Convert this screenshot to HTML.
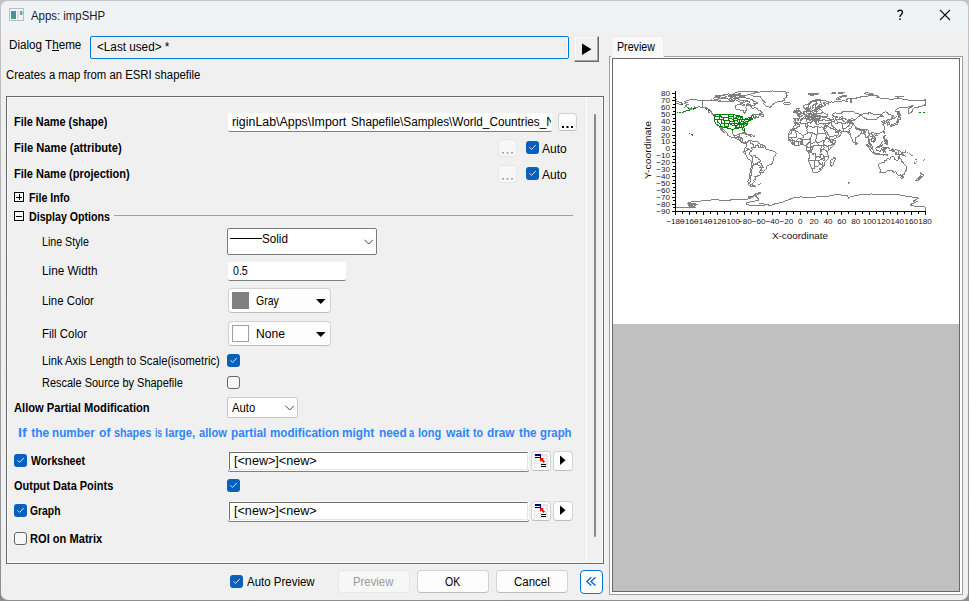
<!DOCTYPE html>
<html><head><meta charset="utf-8"><title>Apps: impSHP</title>
<style>
html,body{margin:0;padding:0;}
body{width:969px;height:601px;overflow:hidden;position:relative;background:linear-gradient(#c4c4c8,#8c8c8c);font-family:"Liberation Sans",sans-serif;font-size:12px;color:#000;}
.abs,.t,div,svg{position:absolute;box-sizing:border-box;}
.t{white-space:pre;line-height:14px;transform-origin:0 0;}
#win{left:1px;top:1px;width:967px;height:599px;background:#f0f0f0;border-radius:7px;overflow:hidden;}
#title{left:0;top:0;width:967px;height:30px;background:#eff3f6;}
.cb{width:13px;height:13px;border-radius:3px;background:#0760be;}
.cb svg{left:0;top:0;}
.cbu{width:13px;height:13px;border-radius:3px;border:1px solid #666;background:#f7f7f7;}
.btn{border:1px solid #d2d2d2;border-bottom-color:#bdbdbd;border-radius:4px;background:#fdfdfd;}
.btnd{border:1px solid #e6e6e6;border-radius:4px;background:#f7f7f7;}
.edit{background:#fff;border-bottom:1px solid #808080;border-radius:2px;}
.sunk{background:#fff;border:1px solid #fcfcfc;border-radius:2px;box-shadow:0 1px 0 #808080;}
.sunk::after{content:'';position:absolute;left:0;top:0;right:0;bottom:0;border:1px solid;border-color:#6b6b6b #e6e6e6 #e6e6e6 #6b6b6b;}

</style></head>
<body>
<div id="win"></div>
<div style="left:1px;top:1px;width:967px;height:30px;background:#eff3f6;border-radius:7px 7px 0 0"></div>
<!-- title icon -->
<svg style="left:9px;top:8px" width="16" height="14" viewBox="0 0 16 14">
<rect x="0.5" y="0.5" width="14" height="12" fill="#f4f4f4" stroke="#b9bcc0"/>
<defs><linearGradient id="g1" x1="0" y1="0" x2="0" y2="1"><stop offset="0" stop-color="#4f86c6"/><stop offset="1" stop-color="#3fa060"/></linearGradient></defs>
<rect x="2" y="3" width="5" height="8" fill="url(#g1)"/>
<rect x="8" y="3" width="2" height="8" fill="#dcdcdc"/>
<rect x="11" y="3" width="2.5" height="4" fill="url(#g1)" opacity="0.8"/>
</svg>
<!-- ? and X -->
<svg style="left:890px;top:5px" width="70" height="22" viewBox="0 0 70 22">
<path d="M7.7 6.9 C7.9 4.7 12.5 4.6 12.5 7.3 C12.5 9.3 9.9 9.6 9.9 12" fill="none" stroke="#111" stroke-width="1.45"/>
<rect x="9.1" y="13.4" width="1.6" height="1.6" fill="#111"/>
<path d="M50 5 L60 15 M60 5 L50 15" stroke="#111" stroke-width="1.1" fill="none"/>
</svg>
<!-- theme combo -->
<div style="left:90px;top:36px;width:479px;height:23px;border:1px solid #0078d4;border-radius:2px;background:#f0f0f0;box-shadow:inset 0 0 0 1px #f9f9f9"></div>
<div style="left:51.5px;top:50px;width:7px;height:1px;background:#000"></div>
<!-- play button -->
<div style="left:574px;top:36px;width:25px;height:26px;background:#f0f0f0;border:1px solid #ebebeb;border-right-color:#696969;border-bottom-color:#696969;box-shadow:inset -1px -1px 0 #a0a0a0, inset 1px 1px 0 #fff"></div>
<svg style="left:581px;top:43px" width="12" height="13" viewBox="0 0 12 13"><path d="M1 0.5 L10.5 6.2 L1 12 Z" fill="#000"/></svg>

<!-- group box -->
<div style="left:6px;top:96px;width:598px;height:468px;border:1px solid #696969;box-shadow:inset 1px 1px 0 #fafafa, inset -1px -1px 0 #fff, 1px 1px 0 #f5f5f5"></div>
<div style="left:586px;top:97px;width:1px;height:466px;background:#fff"></div>
<div style="left:594px;top:114px;width:2px;height:423px;background:#8a8a8a;border-radius:1px"></div>

<!-- file name row -->
<div class="edit" style="left:228px;top:113px;width:324px;height:19px"></div>
<div class="btn" style="left:558px;top:113px;width:19px;height:18px"></div>
<svg style="left:561px;top:125px" width="14" height="4"><rect x="1" y="1" width="2" height="2" fill="#000"/><rect x="5.5" y="1" width="2" height="2" fill="#000"/><rect x="10" y="1" width="2" height="2" fill="#000"/></svg>
<div class="btnd" style="left:498px;top:139px;width:19px;height:18px"></div>
<svg style="left:501px;top:151px" width="14" height="4"><rect x="1" y="1" width="2" height="1.6" fill="#a6a6a6"/><rect x="5.5" y="1" width="2" height="1.6" fill="#a6a6a6"/><rect x="10" y="1" width="2" height="1.6" fill="#a6a6a6"/></svg>
<div class="btnd" style="left:498px;top:165px;width:19px;height:18px"></div>
<svg style="left:501px;top:177px" width="14" height="4"><rect x="1" y="1" width="2" height="1.6" fill="#a6a6a6"/><rect x="5.5" y="1" width="2" height="1.6" fill="#a6a6a6"/><rect x="10" y="1" width="2" height="1.6" fill="#a6a6a6"/></svg>
<div class="cb" style="left:526px;top:141px"><svg width="13" height="13"><path d="M3.5 6.3 L5.6 8.4 L9.8 4" fill="none" stroke="#e4eefa" stroke-width="0.95"/></svg></div>
<div class="cb" style="left:526px;top:167px"><svg width="13" height="13"><path d="M3.5 6.3 L5.6 8.4 L9.8 4" fill="none" stroke="#e4eefa" stroke-width="0.95"/></svg></div>

<!-- tree boxes -->
<div style="left:13px;top:191px;width:12px;height:12px;background:#f8f8f8"></div>
<div style="left:14px;top:192px;width:10px;height:10px;background:#fafafa;border:1px solid #000"></div>
<div style="left:16px;top:197px;width:6px;height:1px;background:#000"></div>
<div style="left:19px;top:194px;width:1px;height:6px;background:#000"></div>
<div style="left:13px;top:210px;width:12px;height:12px;background:#f8f8f8"></div>
<div style="left:14px;top:211px;width:10px;height:10px;background:#fafafa;border:1px solid #000"></div>
<div style="left:16px;top:216px;width:6px;height:1px;background:#000"></div>
<div style="left:114px;top:215px;width:459px;height:1px;background:#a0a0a0"></div>

<!-- line style combo -->
<div style="left:227px;top:228px;width:150px;height:27px;border:1px solid #7a7a7a;border-radius:2px;background:#fff"></div>
<div style="left:230px;top:238px;width:32px;height:1px;background:#000"></div>
<svg style="left:363px;top:238px" width="12" height="8"><path d="M1.5 1.8 L5.7 6 L9.9 1.8" fill="none" stroke="#444" stroke-width="1"/></svg>
<!-- line width -->
<div class="edit" style="left:228px;top:262px;width:118px;height:19px"></div>
<!-- line color -->
<div class="btn" style="left:228px;top:288px;width:103px;height:25px"></div>
<div style="left:232px;top:292px;width:17px;height:17px;background:#808080"></div>
<svg style="left:315px;top:298px" width="12" height="7"><path d="M1 1 H10.6 L5.8 6 Z" fill="#000"/></svg>
<!-- fill color -->
<div class="btn" style="left:228px;top:321px;width:103px;height:25px"></div>
<div style="left:232px;top:325px;width:17px;height:17px;background:#fff;border:1px solid #a0a0a0"></div>
<svg style="left:315px;top:331px" width="12" height="7"><path d="M1 1 H10.6 L5.8 6 Z" fill="#000"/></svg>
<!-- checkboxes -->
<div class="cb" style="left:227px;top:354px"><svg width="13" height="13"><path d="M3.5 6.3 L5.6 8.4 L9.8 4" fill="none" stroke="#e4eefa" stroke-width="0.95"/></svg></div>
<div class="cbu" style="left:227px;top:376px"></div>
<!-- auto combo -->
<div style="left:227px;top:397px;width:71px;height:21px;border:1px solid #c9c9c9;border-radius:2px;background:#fff"></div>
<svg style="left:284px;top:404px" width="12" height="8"><path d="M1.5 1.8 L5.7 6 L9.9 1.8" fill="none" stroke="#444" stroke-width="1"/></svg>

<!-- worksheet row -->
<div class="cb" style="left:14px;top:454px"><svg width="13" height="13"><path d="M3.5 6.3 L5.6 8.4 L9.8 4" fill="none" stroke="#e4eefa" stroke-width="0.95"/></svg></div>
<div class="sunk" style="left:228px;top:451px;width:301px;height:20px"></div>
<div class="btn" style="left:531px;top:451px;width:20px;height:20px"></div>
<div class="btn" style="left:553px;top:451px;width:20px;height:20px"></div>
<svg style="left:559px;top:455px" width="8" height="11"><path d="M1 0.5 L6.5 5.2 L1 10 Z" fill="#000"/></svg>
<svg style="left:534px;top:454px" width="14" height="14" viewBox="0 0 14 14">
<rect x="0" y="0" width="14" height="14" fill="#e6e6e6"/>
<rect x="1" y="2.5" width="11" height="1.6" fill="#fff"/><rect x="1" y="5" width="11" height="1.6" fill="#fff"/><rect x="1" y="7.5" width="11" height="1.6" fill="#fff"/><rect x="1" y="10" width="11" height="1.3" fill="#fff"/><rect x="1" y="12" width="11" height="1.2" fill="#fff"/>
<rect x="6.6" y="0" width="0.6" height="14" fill="#e6e6e6"/>
<rect x="1" y="0" width="6" height="2" fill="#00008b"/>
<rect x="1" y="3" width="6" height="1" fill="#000"/><rect x="6" y="2" width="1" height="1" fill="#000"/>
<path d="M6 4 L9.8 4 L8.7 5.2 L11 7.6 L9.6 9 L7.3 6.6 L6 7.8 Z" fill="#ff0000"/>
<rect x="7" y="10" width="5" height="1" fill="#000"/><rect x="7" y="12" width="5" height="1" fill="#000"/>
</svg>

<div class="cb" style="left:227px;top:479px"><svg width="13" height="13"><path d="M3.5 6.3 L5.6 8.4 L9.8 4" fill="none" stroke="#e4eefa" stroke-width="0.95"/></svg></div>
<!-- graph row -->
<div class="cb" style="left:14px;top:504px"><svg width="13" height="13"><path d="M3.5 6.3 L5.6 8.4 L9.8 4" fill="none" stroke="#e4eefa" stroke-width="0.95"/></svg></div>
<div class="sunk" style="left:228px;top:501px;width:301px;height:20px"></div>
<div class="btn" style="left:531px;top:501px;width:20px;height:20px"></div>
<div class="btn" style="left:553px;top:501px;width:20px;height:20px"></div>
<svg style="left:559px;top:505px" width="8" height="11"><path d="M1 0.5 L6.5 5.2 L1 10 Z" fill="#000"/></svg>
<svg style="left:534px;top:504px" width="14" height="14" viewBox="0 0 14 14">
<rect x="0" y="0" width="14" height="14" fill="#e6e6e6"/>
<rect x="1" y="2.5" width="11" height="1.6" fill="#fff"/><rect x="1" y="5" width="11" height="1.6" fill="#fff"/><rect x="1" y="7.5" width="11" height="1.6" fill="#fff"/><rect x="1" y="10" width="11" height="1.3" fill="#fff"/><rect x="1" y="12" width="11" height="1.2" fill="#fff"/>
<rect x="6.6" y="0" width="0.6" height="14" fill="#e6e6e6"/>
<rect x="1" y="0" width="6" height="2" fill="#00008b"/>
<rect x="1" y="3" width="6" height="1" fill="#000"/><rect x="6" y="2" width="1" height="1" fill="#000"/>
<path d="M6 4 L9.8 4 L8.7 5.2 L11 7.6 L9.6 9 L7.3 6.6 L6 7.8 Z" fill="#ff0000"/>
<rect x="7" y="10" width="5" height="1" fill="#000"/><rect x="7" y="12" width="5" height="1" fill="#000"/>
</svg>

<div class="cbu" style="left:14px;top:532px"></div>

<!-- bottom row -->
<div class="cb" style="left:230px;top:575px"><svg width="13" height="13"><path d="M3.5 6.3 L5.6 8.4 L9.8 4" fill="none" stroke="#e4eefa" stroke-width="0.95"/></svg></div>
<div class="btnd" style="left:338px;top:570px;width:72px;height:23px"></div>
<div class="btn" style="left:417px;top:570px;width:72px;height:23px"></div>
<div class="btn" style="left:496px;top:570px;width:72px;height:23px"></div>
<div style="left:580px;top:570px;width:23px;height:24px;border:1px solid #0078d4;border-radius:4px;background:#fdfdfd"></div>
<svg style="left:585px;top:576px" width="14" height="12"><path d="M6.3 1.2 L1.8 5.4 L6.3 9.6 M10.5 1.2 L6 5.4 L10.5 9.6" fill="none" stroke="#0b63d1" stroke-width="1.35"/></svg>

<!-- preview tab + panel -->
<div style="left:609px;top:56px;width:354px;height:539px;border:1px solid #a0a0a0;background:#fff"></div>
<div style="left:611px;top:36px;width:53px;height:22px;background:#f9f9f9;border:1px solid #ececec;border-bottom:none"></div>
<div style="left:612px;top:58px;width:348px;height:534px;border:1px solid #696969;background:#c0c0c0"></div>
<div style="left:613px;top:59px;width:346px;height:265px;background:#fff"></div>
<svg style="left:613px;top:59px" width="346" height="265" viewBox="613 59 346 265">
<path d="M691.8 99.4L694.9 99.8L697.7 100.1L702.5 100.6L706.7 101.0L709.5 100.3L711.5 100.0L713.6 100.6L717.1 100.6L720.6 101.7L724.0 101.7L727.5 101.3L732.3 101.7L733.7 102.0L734.8 98.9L736.5 100.6L739.3 101.3L741.3 100.4L743.4 100.6L744.1 102.4L740.7 102.7L740.0 104.1L737.9 104.4L735.1 106.2L735.1 108.0L736.1 109.3L738.6 109.6L741.3 110.5L743.2 110.7L743.4 112.0L744.5 113.2L745.6 112.7L745.5 111.0L747.0 109.6L746.9 108.6L745.8 107.9L746.5 105.6L749.7 105.7L751.7 106.5L752.1 108.0L753.8 108.4L755.2 107.0L755.9 107.9L757.3 108.9L757.6 110.0L760.1 110.8L761.6 112.2L760.8 113.1L758.7 114.0L754.2 114.0L752.4 115.1L751.0 116.3L752.4 115.6L753.8 114.8L755.6 114.8L755.2 115.8L755.9 116.9L758.0 117.2L758.7 116.5L758.0 117.4L755.9 118.0L754.5 118.6L754.5 117.9L755.6 117.4L753.8 117.6L751.7 118.5L751.0 119.3L751.7 119.6L750.7 120.1L749.0 120.6L747.9 121.7L747.6 123.1L747.8 124.3L746.3 125.2L745.2 125.8L744.1 126.5L743.8 127.6L744.7 130.0L744.7 131.2L744.0 131.2L742.9 129.5L742.9 128.5L742.0 127.9L741.0 128.1L739.6 127.7L738.2 127.8L738.4 128.6L737.2 128.4L735.2 128.1L734.4 128.6L732.8 129.6L732.9 130.7L732.5 133.2L733.4 135.2L734.8 136.1L736.5 135.8L737.5 134.3L740.0 133.8L739.6 135.2L739.3 136.1L738.7 137.6L740.7 137.6L742.6 138.3L742.3 140.0L742.2 141.0L743.2 142.3L744.8 142.3L745.5 142.0L746.7 142.7M746.3 143.6L745.8 142.8L744.8 143.6L744.1 143.1L742.7 142.9L740.8 141.7L739.6 139.7L738.2 139.3L736.8 139.0L735.1 137.5L733.4 137.8L730.9 136.9L728.2 135.5L727.1 134.5L727.1 133.1L725.4 131.4L724.4 130.3L722.3 128.3L721.8 127.1L720.8 126.7L720.9 127.9L722.3 129.6L723.3 131.4L724.4 132.6L723.9 132.7L722.5 131.4L721.2 129.8L720.6 129.0L720.0 127.6L719.1 126.2L718.1 125.2L716.7 124.7L715.7 123.2L715.4 122.5L714.3 120.8L714.2 118.9L714.3 116.7L713.8 115.2L715.0 115.3L715.0 114.8L713.6 114.1L711.9 113.4L711.5 112.0L710.2 111.1L709.5 110.0L707.7 108.6L705.6 108.4L704.6 107.6L703.2 107.3L700.5 107.2L699.1 106.5L697.3 107.2L696.3 107.7L694.9 106.7L695.3 107.7L693.5 108.2L691.8 108.9L690.4 110.0L688.7 110.5L687.3 110.8L686.2 111.0L688.7 110.0L690.7 108.9L691.4 108.0L690.1 108.2L688.0 108.1L688.0 107.2L685.9 106.7L685.2 105.8L685.9 105.1L688.7 104.8L688.7 104.1L686.6 104.1L684.9 103.5L683.8 103.3L686.6 102.7L688.0 102.9L686.9 102.4L685.2 101.5L687.3 100.6L689.4 100.0L691.8 99.4M746.7 142.7L747.9 141.4L748.4 141.0L750.0 140.3L750.7 140.1L750.6 141.2L751.7 140.7L752.8 141.4L754.5 141.3L755.9 141.4L757.3 141.2L758.0 142.1L758.7 142.8L759.7 143.8L760.8 144.5L762.1 144.5L763.9 145.2L764.8 145.9L765.6 147.4L765.6 148.6L766.6 149.3L768.4 149.3L769.4 150.6L771.5 150.6L773.2 151.2L774.5 151.9L775.8 152.2L776.1 153.6L775.9 155.2L774.6 156.6L773.6 157.6L773.2 159.3L773.1 160.9L772.5 162.4L771.8 163.8L770.5 164.5L769.1 165.1L767.7 165.7L766.6 166.6L766.5 168.2L765.6 169.3L764.1 170.9L763.2 172.1L762.1 172.7L760.8 172.4L759.8 172.1L760.6 173.5L760.3 174.9L758.7 175.5L757.3 175.5L757.1 176.8L755.2 176.9L755.9 178.0L755.0 179.5L753.5 180.4L754.5 181.4L754.5 181.8L753.1 183.1L752.4 183.8L752.8 184.7L752.8 185.0L755.1 186.4L753.8 186.8L751.7 186.6L750.4 185.9L749.0 184.9L748.3 183.1L747.9 181.1L749.0 179.0L749.2 177.5L749.3 175.9L749.7 174.2L750.6 171.4L750.7 169.3L751.4 166.2L751.6 162.4L751.5 161.3L750.4 160.4L748.3 159.3L747.4 158.2L746.8 156.9L745.8 154.8L744.9 153.5L744.0 152.8L743.9 151.6L744.8 150.9L744.2 150.1L744.5 149.0L744.8 148.1L745.6 147.6L746.0 146.8L746.8 145.9L746.5 144.5L746.3 143.6M758.0 184.2L760.1 184.0L759.7 184.7L758.0 184.5L758.0 184.2M796.2 123.9L798.9 124.4L801.0 123.4L802.3 123.2L805.8 123.2L807.2 122.9L807.9 123.2L807.3 125.2L807.9 125.7L810.7 126.3L813.4 127.7L814.1 127.2L814.1 126.0L816.2 126.1L817.6 126.8L820.4 127.3L821.7 126.9L822.6 127.1L824.0 127.0L822.8 127.9L823.5 129.3L824.2 130.0L824.9 132.1L825.9 134.1L826.2 135.9L827.3 137.9L828.7 138.6L830.2 140.0L830.1 140.7L831.1 141.4L832.8 140.9L835.7 140.5L835.6 141.4L834.2 144.1L833.2 145.9L830.8 147.9L829.0 149.8L828.0 151.0L827.3 152.8L827.6 154.5L828.3 155.9L828.3 158.6L826.6 160.6L824.5 162.4L824.9 164.8L823.1 166.2L823.0 167.3L821.7 169.2L819.7 171.4L817.9 172.1L815.5 172.2L814.1 172.6L813.0 172.1L812.7 170.7L811.7 168.4L810.7 166.6L810.3 164.2L808.6 161.0L808.4 159.7L809.6 157.3L809.4 154.8L808.7 152.8L808.4 151.7L806.8 150.3L806.5 149.1L806.8 147.9L807.1 146.6L806.4 145.5L804.4 145.7L803.4 144.3L802.0 144.3L801.0 144.6L798.9 145.3L797.1 145.0L795.1 145.7L793.7 144.8L792.3 143.9L791.1 142.8L790.9 141.9L789.9 141.0L788.7 140.1L788.6 139.3L788.1 138.5L788.8 137.6L789.0 135.5L788.5 134.1L789.2 132.4L790.2 130.7L791.2 129.4L792.6 128.7L793.5 128.1L793.5 126.9L794.4 125.6L795.5 125.2L796.2 123.9M834.4 156.9L835.3 159.3L834.6 160.4L833.4 164.2L832.8 165.9L831.4 166.2L830.4 164.8L830.3 163.8L831.1 162.3L830.8 160.7L831.4 159.7L833.2 158.8L834.4 156.9M796.4 123.8L795.8 123.2L795.1 122.9L794.1 123.1L794.2 122.0L793.7 121.9L794.2 120.7L794.2 119.7L793.8 118.9L794.7 118.5L796.8 118.5L798.9 118.7L799.4 117.9L799.4 116.9L798.5 116.0L797.1 115.6L796.9 115.1L798.2 114.9L799.1 115.1L799.1 114.4L800.4 114.5L801.3 114.0L801.4 113.5L802.7 113.1L803.4 112.4L803.6 112.0L805.1 111.7L806.1 111.3L806.2 110.3L805.9 109.3L807.5 108.8L807.5 109.6L807.1 110.3L807.2 111.0L807.9 111.3L808.9 111.1L810.1 111.4L811.7 111.0L813.1 110.8L814.0 111.1L814.8 110.5L814.8 109.3L815.9 108.8L817.1 109.1L817.2 108.4L816.5 107.8L819.0 107.6L819.7 107.6L821.1 107.2L820.0 106.9L818.3 106.9L816.2 107.3L815.0 106.7L815.2 105.1L817.6 103.8L817.9 103.4L815.9 103.2L815.2 104.1L812.7 105.5L812.2 106.5L812.2 106.9L813.3 107.2L812.7 107.9L811.8 109.3L811.3 109.8L810.2 110.3L809.3 110.4L809.1 109.6L808.0 108.2L807.7 107.7L806.8 107.9L805.8 108.5L804.4 108.2L803.7 107.2L803.7 105.8L805.1 105.1L807.2 104.4L809.3 103.1L810.7 101.7L812.4 100.9L814.1 100.3L816.2 99.8L818.1 99.5L819.7 99.6L821.7 100.1L821.1 100.4L823.1 100.7L825.9 101.0L828.7 101.9L828.7 102.9L826.9 103.1L823.5 102.6L824.5 104.2L825.9 104.6L826.2 103.8L828.0 104.0L828.0 103.1L830.8 102.9L831.1 101.7L832.8 102.4L837.3 101.3L839.8 101.3L841.8 101.3L842.2 100.4L845.3 101.0L847.4 101.3L846.7 100.6L846.7 99.6L848.1 98.2L850.2 98.4L850.9 100.0L850.9 101.7L850.2 102.7L851.5 102.4L851.9 101.0L851.2 99.3L852.2 98.6L854.3 98.9L855.7 98.9L856.4 97.9L860.6 97.7L860.6 96.9L868.2 96.0L872.3 95.0L873.7 95.3L878.6 96.2L878.6 97.6L876.5 97.5L878.6 97.9L883.4 98.2L888.3 98.6L890.4 99.6L892.4 99.3L897.3 98.4L904.2 99.3L905.6 99.6L911.2 100.5L912.5 100.6L918.1 100.3L918.8 101.0L922.2 100.4L925.0 101.0M925.0 103.8L924.3 105.5L919.5 106.5L918.1 107.2L914.6 107.2L913.2 108.6L912.5 110.7L911.2 112.7L908.9 113.4L908.4 110.7L908.0 109.3L909.8 107.9L911.8 106.9L913.9 105.5L911.2 106.0L908.7 106.2L907.7 107.7L904.2 107.6L899.4 107.7L897.3 108.9L895.2 111.0L898.0 111.8L897.6 113.4L897.5 115.5L895.9 116.9L893.8 118.6L891.7 118.8L890.8 119.4L890.2 120.1L888.6 121.2L889.9 123.1L889.9 124.1L887.9 124.9L887.9 123.2L886.9 122.5L887.0 121.4L886.4 121.0L884.5 121.7L884.8 120.6L884.1 120.4L882.0 121.6L882.7 122.9L884.0 122.5L885.2 123.1L883.6 123.8L882.9 124.5L884.0 126.2L884.7 127.2L884.7 128.3L884.5 129.1L883.1 131.0L881.4 132.4L879.3 133.2L876.8 133.9L876.5 134.6L875.5 133.6L874.1 134.6L873.6 135.5L874.4 136.9L875.7 137.9L876.0 139.7L875.8 140.7L874.3 141.4L873.0 142.6L873.0 141.7L871.6 141.0L871.3 140.2L870.3 139.9L869.6 139.4L869.1 141.0L869.1 142.2L869.8 143.6L870.6 143.9L871.6 144.8L872.0 145.9L872.5 147.7L872.0 147.7L870.5 146.7L869.8 144.8L869.4 144.1L868.4 143.1L868.5 141.7L868.7 140.3L868.0 137.9L867.6 137.0L866.4 137.7L865.6 137.4L865.8 136.2L865.1 134.8L864.2 134.1L863.7 133.0L862.8 133.4L861.9 133.6L860.6 133.9L860.2 134.8L859.2 135.2L857.3 137.0L855.8 137.9L855.9 139.7L855.6 141.5L855.0 142.1L854.5 142.5L854.0 143.0L853.1 141.9L852.2 140.0L851.9 138.6L851.2 137.6L850.8 135.5L850.6 134.1L850.5 133.8L849.1 134.3L848.1 133.3L849.0 132.8L847.7 132.4L846.9 131.5L846.3 131.1L843.0 131.2L840.5 131.0L839.8 130.1L839.3 129.9L838.0 130.3L836.0 129.4L835.1 127.9L834.2 127.7L833.5 128.1L833.9 129.2L835.1 130.3L835.5 131.5L835.8 130.6L836.0 131.8L837.7 131.9L839.1 130.7L839.4 131.7L840.9 132.3L841.7 133.2L840.9 134.5L840.2 135.5L838.6 136.7L836.4 137.6L834.0 139.0L831.4 139.8L830.4 139.9L829.9 138.4L829.9 137.3L828.7 135.5L827.4 133.8L826.9 132.2L826.0 131.2L824.7 129.3L824.4 128.3L824.0 127.0L824.5 126.0L825.1 124.5L825.3 123.3L823.8 123.6L822.6 123.6L821.5 123.2L820.4 123.6L819.2 123.2L818.5 122.2L818.8 121.4L818.4 121.0L820.4 120.7L820.4 120.2L822.0 120.2L823.5 119.6L824.5 119.6L825.6 120.1L826.9 120.4L829.0 120.0L829.0 119.1L827.8 118.6L826.6 117.9L826.1 117.4L826.9 116.8L827.4 116.0L826.6 116.1L824.7 116.6L824.5 117.1L825.6 117.4L823.5 118.0L822.8 117.3L823.5 116.8L822.3 116.5L821.5 116.6L820.8 117.4L820.1 118.4L819.6 119.1L819.7 119.7L820.4 120.2M818.4 121.0L818.3 120.5L816.9 120.5L816.5 120.9L816.1 120.7L816.1 121.4L816.9 122.4L816.2 123.4L815.3 123.2L815.0 122.2L814.1 121.2L813.7 120.0L813.8 119.6L812.4 118.9L811.3 118.5L810.7 117.6L809.8 117.1L808.9 117.4L808.9 118.1L809.7 118.6L810.1 119.4L811.3 119.7L813.1 120.9L812.0 120.7L811.8 121.3L812.1 121.7L811.6 122.2L811.1 122.4L811.3 121.7L811.1 121.0L810.3 120.5L808.8 119.8L807.5 119.0L807.3 118.3L806.4 118.0L805.5 118.4L804.6 118.9L803.4 118.7L802.5 118.8L802.5 119.7L800.8 120.5L800.1 121.4L800.4 121.9L799.8 122.7L798.9 123.2L797.2 123.3L796.4 123.8M832.8 117.2L834.6 116.5L836.0 116.2L837.0 116.3L837.0 117.4L835.6 117.9L835.1 118.9L836.6 120.0L837.0 121.0L837.5 121.7L837.5 123.1L835.6 123.3L834.2 122.7L834.1 121.7L834.6 120.7L833.2 118.9L832.8 117.2M796.3 114.0L797.8 113.9L799.6 113.6L801.2 113.3L800.6 113.1L801.4 112.2L800.4 112.0L800.3 111.6L799.2 110.7L798.9 110.0L798.0 110.0L798.9 108.9L797.5 108.9L798.2 108.2L796.8 108.2L796.1 108.9L796.4 110.0L796.9 110.3L796.8 110.8L797.9 110.7L798.2 111.5L798.2 111.8L797.1 111.8L797.3 112.5L796.7 112.9L798.2 113.1L797.3 113.3L796.3 114.0M796.1 112.6L796.0 111.7L796.4 111.0L796.0 110.5L794.5 110.6L794.4 111.1L793.3 111.2L793.5 111.8L793.8 112.3L793.2 112.9L794.4 113.0L796.1 112.6M784.7 104.5L783.6 103.4L784.7 102.8L787.8 102.9L789.9 102.9L790.8 103.8L789.5 104.3L787.2 104.9L784.7 104.5M808.9 122.4L811.0 122.3L810.7 123.3L808.9 122.7L808.9 122.4M806.0 120.3L807.0 120.3L806.9 121.6L806.1 121.7L806.0 120.3M806.2 119.4L806.8 118.9L806.8 120.0L806.4 119.9L806.2 119.4M816.6 124.1L818.5 124.3L817.2 124.5L816.6 124.1M822.6 124.5L824.2 124.0L823.6 124.6L822.6 124.5M807.9 93.7L810.0 95.1L812.0 95.7L814.8 94.4L816.2 95.1L817.6 94.4L815.5 93.9L819.0 93.4L816.9 93.1L812.7 93.3L811.3 93.5L807.9 93.7M808.6 94.2L814.1 94.4M810.0 94.0L815.5 93.5M810.7 94.8L813.4 95.1M836.0 99.3L837.0 98.2L839.1 96.9L841.8 96.0L847.4 95.6L846.0 96.3L841.8 97.1L839.8 98.2L838.7 98.9L840.1 99.8L837.3 99.8L836.0 99.3M831.4 93.1L834.9 93.4L836.3 92.8L833.5 92.7L831.4 93.1M837.7 93.3L841.8 93.3L844.6 92.7L839.8 92.6L837.7 93.3M866.1 94.1L869.6 94.8L873.0 94.4L872.3 93.7L869.6 93.1L866.1 92.7L864.7 93.4L866.1 94.1M866.8 94.4L871.0 93.7M895.2 96.5L897.3 97.0L900.8 96.7L904.2 96.7L902.8 96.2L898.7 96.0L895.2 96.5M897.3 97.9L899.4 98.0M901.5 96.6L904.2 97.0M924.0 99.5L925.0 99.6M675.5 99.6L677.2 99.4M675.5 101.0L677.6 101.5L680.4 102.4L682.4 103.1L681.0 103.8L680.4 104.2L678.3 103.9L676.9 103.4L675.5 103.8M898.7 111.1L899.6 112.4L899.5 114.1L900.5 114.8L899.2 116.2L899.7 116.7L898.7 116.9L898.7 115.5L898.5 113.8L898.5 112.7L898.7 111.1M898.3 117.2L901.0 118.1L900.8 118.8L899.6 119.6L898.0 119.3L897.4 119.9L897.6 118.7L898.3 117.2M897.8 120.0L898.7 121.4L898.0 122.4L897.9 123.8L897.3 124.3L896.5 124.7L895.2 124.7L894.4 125.5L893.8 124.7L892.1 125.0L891.1 125.2L891.1 124.7L892.3 124.1L894.4 124.0L895.1 122.9L895.4 123.2L896.4 122.5L897.2 121.2L897.3 120.3L897.8 120.0M891.1 125.2L891.6 126.0L891.3 126.9L890.5 127.0L890.2 126.0L890.4 125.5L891.1 125.2M892.1 125.2L893.5 125.0L893.3 125.6L892.4 126.0L892.1 125.2M884.5 131.2L884.7 131.7L884.1 133.4L883.6 132.7L884.0 131.6L884.5 131.2M876.8 134.8L877.2 135.2L876.5 135.9L875.6 135.5L876.2 134.8L876.8 134.8M883.8 135.9L885.0 135.9L884.8 137.2L884.5 138.3L885.2 139.0L886.2 139.7L886.2 140.0L885.5 139.3L884.7 139.1L883.8 138.8L883.4 137.9L883.6 137.4L883.8 135.9M884.8 143.8L885.9 142.6L887.2 141.9L887.9 143.1L887.6 144.3L887.2 144.6L886.3 144.3L886.1 143.4L884.8 143.8M886.4 140.0L887.2 140.2L887.1 141.0L886.8 141.6L886.4 140.8L886.4 140.0M885.2 140.7L885.6 141.2L885.7 142.2L885.2 141.9L884.8 141.2L885.2 140.7M881.5 142.8L882.4 141.9L883.1 140.8M883.8 139.4L884.5 139.7L884.3 140.1L883.8 139.4M875.8 147.6L876.5 147.5L877.4 146.8L878.6 146.4L879.6 145.3L880.7 144.0L881.5 143.8L882.7 145.0L882.0 145.7L881.9 146.6L882.6 147.9L881.7 148.1L881.7 149.2L881.0 149.9L880.7 151.2L879.6 151.4L878.6 150.8L877.5 150.9L876.6 150.6L876.5 149.5L875.8 148.8L875.8 147.6M866.3 144.8L867.8 145.0L869.6 146.6L870.6 147.2L872.0 148.3L872.5 149.7L873.7 150.7L873.6 152.6L872.7 152.6L871.0 151.2L869.8 149.3L868.7 147.5L867.6 146.2L866.3 144.8M873.2 153.3L874.1 152.8L875.5 153.2L877.2 153.1L878.6 153.5L879.6 154.0L879.5 154.6L877.2 154.4L875.5 154.0L874.1 153.7L873.2 153.3M883.2 149.2L883.4 147.9L884.1 147.7L885.9 147.9L887.0 147.5L886.5 148.3L885.5 148.3L884.1 148.3L883.6 149.2L884.5 149.3L885.7 149.2L884.8 149.9L884.5 150.6L885.2 151.4L885.5 152.4L884.8 151.9L884.1 151.0L883.8 150.7L883.6 152.4L883.1 152.4L883.1 151.0L882.6 150.5L883.2 149.2M891.1 149.2L892.1 148.9L893.1 149.2L893.8 150.9L895.8 149.7L898.0 150.4L900.4 151.2L901.5 152.4L902.7 152.9L902.1 153.5L903.2 154.6L904.6 155.9L902.8 155.7L901.5 154.1L900.1 154.0L899.4 155.0L898.0 154.9L896.6 154.1L895.9 154.4L895.8 153.3L896.5 153.5L895.9 152.4L893.8 151.7L892.8 151.2L891.7 150.6L891.1 149.2M880.4 154.3L881.4 154.4L882.7 154.4L882.4 154.8L880.7 154.8L880.4 154.3M883.3 154.4L885.5 154.4L885.4 154.8L883.4 154.8L883.3 154.4M885.9 155.7L886.9 155.0L888.3 154.4L887.9 154.8L886.5 155.7L885.9 155.7M882.7 155.2L884.0 155.5M888.6 147.4L889.0 148.3L889.3 149.1L888.8 148.1L888.6 147.4M889.0 150.7L890.9 150.9L890.0 151.1L889.0 150.7M887.6 150.9L888.3 151.1M903.5 152.5L904.6 152.4L905.6 151.5L905.8 152.1L904.8 152.9L903.5 152.8L903.5 152.5M904.9 150.5L906.2 151.2M907.5 152.4L908.3 153.3M909.1 153.5L910.8 154.4M911.0 155.0L911.8 155.5M911.8 154.5L912.7 155.9M915.7 159.0L916.2 159.9M916.7 160.8L917.0 161.4M913.9 162.5L915.3 163.5L916.0 164.1M923.3 160.7L924.0 161.1M924.3 159.9L925.0 159.8M855.7 141.9L857.0 143.4L856.4 144.3L855.8 144.5L855.6 143.1L855.7 141.9M878.9 163.8L879.4 163.7L881.2 162.8L882.7 162.4L884.5 162.1L885.0 160.6L885.9 160.6L886.9 159.3L887.9 158.3L889.0 159.0L890.0 159.0L890.4 157.6L890.9 157.1L892.1 156.9L892.1 156.4L893.8 157.0L895.1 157.0L894.5 157.9L894.2 159.0L895.6 159.7L896.9 160.7L897.8 160.6L898.4 158.6L898.4 157.3L899.0 156.0L899.7 157.5L899.9 158.6L901.0 159.0L901.5 161.4L903.2 162.6L904.0 164.0L904.8 164.8L906.3 166.2L906.6 168.1L906.3 170.0L905.3 171.7L904.4 173.5L904.2 174.5L902.1 175.1L901.6 175.5L900.5 175.0L899.7 175.4L898.0 175.0L897.1 174.0L896.3 173.1L895.9 172.0L895.8 171.1L894.5 172.6L894.2 172.6L893.1 171.3L891.2 170.4L889.5 170.6L887.6 170.9L886.2 171.4L885.9 172.0L883.4 172.0L882.0 172.8L880.7 172.6L880.0 172.3L880.4 170.6L880.0 169.3L879.4 168.0L878.8 166.6L878.9 165.2L878.9 163.8M900.5 176.7L903.0 176.8L903.0 177.6L902.5 178.7L901.5 178.7L900.9 177.8L900.5 176.7M920.0 172.4L921.2 173.8L922.1 174.0L922.2 174.6L923.8 174.6L923.1 175.9L922.4 176.9L921.5 177.2L921.6 176.2L920.7 175.8L921.3 174.9L921.2 174.2L920.2 172.8L920.0 172.4M920.0 176.6L921.0 177.3L920.2 178.3L919.8 178.9L918.9 179.3L918.4 180.4L917.0 180.8L915.7 180.4L916.4 179.3L917.4 178.8L918.8 177.8L919.6 176.8L920.0 176.6M847.9 182.4L849.1 182.6L848.4 183.0L847.9 182.4M741.4 133.5L743.1 132.7L744.8 132.7L746.9 133.8L748.8 134.7L746.5 134.9L745.8 134.3L743.8 133.4L741.4 133.5M748.7 135.9L749.7 134.9L751.7 135.0L752.8 135.8L751.4 136.1L750.4 136.1L748.7 135.9M750.5 135.0L750.5 136.2M746.0 136.0L747.4 136.2L746.5 136.3L746.0 136.0M753.7 135.9L754.7 136.0L753.8 136.2L753.7 135.9M759.2 115.7L760.4 113.8L761.8 113.0L761.4 114.1L763.2 114.8L763.7 116.2L762.8 116.3L761.6 116.2L759.2 115.7M711.3 113.6L713.3 114.0L714.7 115.1L713.6 115.0L711.3 113.6M708.1 111.3L708.9 112.0L709.5 112.7L708.4 111.9L708.1 111.3M692.1 134.7L692.8 135.0L692.4 135.5L692.1 134.7M691.4 134.1L692.1 134.3M690.6 133.8L691.0 133.9M689.6 133.4L689.8 133.5M685.9 111.3L684.9 111.6M683.8 111.8L683.1 112.2M680.4 112.6L679.0 112.7M677.9 112.9L676.9 113.0M919.8 112.1L920.5 112.2M923.1 112.7L924.0 112.9M693.2 108.9L694.6 108.7L693.9 109.3L693.2 108.9M682.4 104.9L681.4 104.8M685.2 107.2L684.5 107.0M744.8 97.7L747.6 98.4L751.0 99.4L753.1 100.3L753.8 101.1L757.3 102.4L757.3 103.1L755.9 103.8L753.5 103.4L755.6 104.9L753.1 105.3L754.5 105.8L751.0 105.2L749.0 104.2L746.2 104.1L749.0 103.4L749.7 101.8L746.9 100.6L743.4 100.3L741.3 100.3L738.6 99.6L737.9 97.9L741.3 97.7L744.8 97.7M718.5 99.3L719.9 100.6L721.9 101.3L726.8 101.1L729.6 101.0L730.3 100.3L727.5 98.6L725.4 98.2L722.6 98.4L718.5 98.2L718.5 99.3M713.6 98.9L715.0 99.5L717.1 99.3L719.9 97.9L718.5 97.3L714.3 97.3L713.6 98.9M737.9 95.8L744.8 96.0L746.2 95.5L748.3 94.4L750.4 94.1L754.5 93.1L757.3 92.0L757.3 91.7L751.7 91.3L744.8 91.3L737.9 92.0L736.5 92.7L740.0 93.4L740.0 94.4L737.9 95.8M733.7 96.5L736.5 97.1L744.8 97.1L744.8 96.4L738.6 96.0L733.7 95.8L733.7 96.5M719.2 96.7L722.6 97.3L726.8 96.9L726.8 96.2L724.0 95.8L719.9 96.0L719.2 96.7M728.2 96.7L732.3 96.9L732.3 95.8L728.9 96.0L728.2 96.7M715.0 96.2L718.5 96.4L719.9 95.5L717.1 95.1L715.0 96.2M733.7 94.8L737.9 94.6L740.0 93.7L736.5 92.6L733.7 93.4L733.7 94.8M727.5 95.1L731.6 94.9L733.0 94.2L728.2 94.0L723.3 94.6L727.5 95.1M729.6 98.2L732.3 99.3L733.4 98.6L733.0 97.7L730.9 97.5L729.6 98.2M734.1 97.6L737.9 97.7L737.5 98.6L735.1 98.9L734.1 97.6M731.6 101.0L733.7 101.1L734.1 100.4L732.3 100.3L731.6 101.0M740.0 103.2L742.0 103.6L744.5 104.8L742.7 105.1L740.7 104.8L740.0 103.2M744.8 105.5L743.4 105.3M745.2 100.6L747.6 101.0L747.9 101.5L746.2 101.7L745.2 100.6M749.7 94.4L753.1 96.2L760.1 96.5L762.8 100.3L764.9 102.4L763.5 103.4L765.6 105.8L769.1 107.2L770.5 107.2L771.8 105.1L774.6 103.2L778.1 101.7L782.2 101.1L785.0 100.0L783.6 98.6L786.4 97.5L787.1 95.5L785.7 93.4L788.5 92.4L780.9 91.2L772.5 91.0L762.1 91.7L757.3 92.4L753.1 93.1L753.8 93.4L749.7 94.4M675.5 207.6L688.0 207.6L696.3 207.3L688.0 205.9L692.8 205.2L689.4 204.5L697.7 204.2L687.5 203.4L690.7 202.1L696.3 201.4L705.4 200.7L713.6 199.7L720.6 200.1L725.4 200.4L730.9 200.1L730.9 199.0L737.9 199.0L744.8 199.4L748.3 199.0L751.7 197.6L753.8 195.6L755.9 193.8L760.1 192.5L760.8 193.1L758.0 194.2L755.2 195.9L758.0 198.3L758.0 200.4L751.7 201.8L746.2 202.5L746.2 204.5L751.7 205.6L758.7 205.9L765.6 204.9L771.1 205.2L776.0 203.5L780.9 202.8L785.0 201.1L788.8 199.7L792.8 198.0L796.8 197.6L800.3 196.9L807.2 197.3L814.1 197.2L821.1 196.6L824.5 196.3L828.0 196.6L830.1 195.6L834.9 194.9L838.2 194.2L840.5 194.9L843.5 195.4L847.4 195.9L848.4 198.3L850.9 196.6L854.3 195.9L856.8 195.6L861.3 194.5L866.1 194.7L871.5 194.0L876.5 194.5L883.4 194.7L889.0 194.9L894.2 194.3L898.7 194.7L904.2 195.9L910.1 196.6L914.6 197.5L918.8 198.2L915.3 200.1L913.4 201.4L915.3 202.5L911.2 203.8L910.8 205.2L916.7 206.6L925.0 207.0L925.0 210.8M688.0 203.5L696.3 203.2L688.0 204.5L696.3 205.2M748.3 196.9L751.7 196.3L750.4 198.3L748.3 196.9M913.2 200.4L918.1 201.4M758.7 203.8L769.1 204.2M702.5 100.6L702.5 107.0L703.9 107.2L705.0 108.0L706.7 107.6L708.1 109.3L710.2 110.0L710.2 110.9M715.0 114.8L734.4 114.8L734.7 115.0L737.2 115.4L738.6 115.5L741.5 116.5L742.4 117.0L743.1 118.9L742.7 119.6L745.5 119.1L745.5 118.7L747.2 118.5L748.5 117.6L750.7 117.6L751.5 116.9L752.3 115.9L753.1 116.0L753.3 117.1L753.8 117.6M719.1 126.2L720.7 126.2L723.3 127.0L725.3 127.0L725.3 126.7L726.4 126.7L727.8 128.1L728.9 128.6L730.3 128.3L731.3 129.6L732.9 130.7M736.4 138.6L736.5 137.6L737.2 137.6L737.2 136.3L738.4 136.3L739.1 135.9M738.4 136.3L738.4 137.6L739.1 137.8M737.8 139.2L738.4 138.7L738.4 137.6M738.4 138.7L739.4 139.4M739.5 139.7L740.2 139.1L741.3 138.6L742.6 138.3M740.9 141.0L741.6 141.0L742.2 141.1M742.7 142.9L742.8 142.1M746.7 142.7L746.3 143.6M750.7 140.1L750.0 141.0L750.1 142.4L750.1 143.7L751.7 143.8L753.5 144.3L753.3 145.9L753.8 147.2L753.9 147.8M753.9 147.8L751.9 147.5L752.1 149.3L751.7 151.5M751.7 151.5L750.4 150.3L749.0 149.3L748.1 148.7M748.1 148.7L746.5 148.3L745.6 147.6M748.1 148.7L747.9 149.7L746.2 150.9L745.5 152.1L744.6 151.7L744.6 151.0M751.7 151.5L749.7 152.1L749.0 153.8L750.0 155.2L751.3 155.2L751.3 156.2L752.1 156.2M752.1 156.2L752.6 157.3L752.4 158.6L752.1 159.3L752.4 160.0L752.1 160.7L751.5 161.3M752.1 156.2L753.1 156.0L755.0 155.4L755.2 156.9L757.3 157.9L758.3 158.2L758.7 159.8L759.9 159.9L760.1 160.7L760.3 161.7L759.9 162.4M759.9 162.4L759.4 161.9L757.4 162.2L756.9 163.9M756.9 163.9L755.7 164.4L755.2 163.9L753.8 164.4M753.8 164.4L753.1 163.5L752.8 162.1L752.1 160.7M753.8 164.4L752.9 165.5L752.8 167.3L751.9 169.3L751.7 171.4L751.4 173.5L751.0 175.5L750.5 177.6L750.7 179.7L750.4 181.4L749.7 183.1L750.1 184.2L752.4 184.7L752.8 184.7M752.7 185.0L752.7 186.5M759.9 162.4L760.2 163.9L761.7 164.0L761.8 165.2L762.6 165.2L762.4 166.3M756.9 163.9L758.0 165.1L760.1 165.9L760.3 166.2L759.6 167.4L761.4 167.5L762.4 166.3M762.4 166.3L763.0 167.3L761.6 168.2L760.3 169.5M760.3 169.5L761.4 169.9L763.2 171.1L763.2 171.9M760.3 169.5L759.9 171.1L759.8 172.1M753.9 147.8L754.9 148.1L755.9 147.2L755.9 145.9L758.0 145.5L758.2 145.0M758.2 145.0L757.8 144.5L758.7 142.8M758.2 145.0L758.8 145.5L758.8 147.2L760.1 147.6L761.1 147.3M760.8 144.5L760.1 145.9L761.1 147.3M761.1 147.3L762.5 147.0L763.9 147.1L764.5 145.7M762.8 144.6L762.5 147.0M798.9 124.4L799.2 126.2L797.8 126.9L796.8 127.9L794.2 128.8L794.2 129.6M794.2 129.6L791.2 129.5M794.2 129.6L794.2 130.7L791.9 130.7L791.9 132.4L791.2 132.7L791.2 133.9L788.5 134.1M794.2 129.8L796.9 131.4L795.8 131.4L796.4 137.2L796.6 137.9L792.3 137.9L791.8 138.5L790.6 137.2L788.8 137.6M796.9 131.4L801.0 134.1L801.1 134.5L802.3 135.2L803.2 135.4M803.2 135.4L804.4 135.0L805.5 134.3L808.6 132.4M808.6 132.4L807.2 131.7L806.8 130.3L807.2 129.6L806.8 127.8M806.8 127.8L805.9 126.2L805.5 125.3L806.1 123.2M806.8 127.8L807.3 126.9L808.2 125.7M817.6 126.8L817.6 133.4L817.6 134.8L816.9 134.8L816.9 135.2M816.9 135.2L811.3 132.4L810.7 132.7M810.7 132.7L810.1 133.0L808.6 132.4M817.6 133.4L825.8 133.4M810.7 132.7L811.2 134.8L811.0 137.2L809.6 139.0L809.6 139.2M809.6 139.2L807.2 139.5L805.1 139.7L803.0 139.3L802.8 140.5M803.2 135.4L803.2 137.2L802.7 137.9L801.0 138.3L800.4 138.3M800.4 138.3L801.0 139.4L801.8 140.0L802.8 140.5M800.4 138.3L798.9 138.4L797.5 139.5L796.4 140.7L796.4 141.4M796.4 141.4L794.7 141.5L794.4 140.7L792.4 140.2M792.4 140.2L792.3 139.4L791.8 138.5M792.4 140.2L790.8 139.9L788.7 140.1M788.6 139.2L790.6 139.1L790.6 139.4L788.6 139.5M789.9 141.0L790.7 140.5L790.8 139.9M791.1 142.4L792.6 141.7L793.1 142.8L792.3 143.9M793.1 142.8L794.4 143.4L795.1 145.7M794.4 143.4L794.7 141.5M798.3 145.2L798.3 142.1L798.3 141.0M796.4 141.4L798.3 141.9M798.3 141.0L800.3 141.0L800.9 141.0M801.1 144.4L800.6 142.8L800.3 141.0M801.4 144.3L801.3 142.4L800.9 141.0L801.8 140.0M802.1 144.2L802.2 142.4L802.8 140.5M806.1 145.4L806.8 144.1L808.2 143.9L809.3 142.1L810.3 140.0L810.0 139.7L809.6 139.2M810.3 140.0L811.0 141.7L810.0 141.9L811.0 143.4M811.0 143.4L813.1 143.1L814.8 142.1L816.1 141.0M816.9 135.2L816.9 137.8L815.9 139.0L815.5 139.9L816.1 141.0M811.0 143.4L810.3 145.2L811.3 147.1M807.1 147.0L809.5 147.1L811.3 147.1M806.9 147.9L808.1 147.9L808.1 147.1M809.5 147.1L810.3 147.9L810.0 149.7L810.2 150.2L808.6 150.2L808.0 151.3M811.3 147.1L813.1 146.2M813.1 146.2L812.6 148.6L811.5 150.0L811.2 151.4L810.3 152.0L809.3 151.8L808.7 152.6M813.1 146.2L813.1 145.7L815.9 145.8L817.6 145.2L819.2 145.2M816.1 141.0L816.5 142.6L817.6 143.4L819.2 145.2M816.5 142.6L816.9 142.6L818.3 142.1L819.7 142.1L821.1 141.7L822.4 140.3L823.1 140.2L823.1 141.4L823.8 142.1M823.1 143.1L824.2 141.4L824.5 140.3L825.3 139.7L825.6 138.8M825.6 138.8L825.9 136.9L826.9 136.2M825.6 138.8L827.3 138.5L828.7 139.0L829.6 140.0M829.6 140.0L829.2 141.0L830.1 140.7M830.1 140.7L829.9 141.1L830.8 142.4L833.5 143.1L831.4 145.2L829.4 145.9L828.7 145.9M828.7 145.9L827.6 146.2L826.6 146.1L825.2 145.5L824.5 144.8M824.5 144.8L823.8 144.1L823.1 143.1M828.7 145.9L828.7 148.6L829.0 149.8M823.8 145.7L824.2 147.8L823.8 148.6L823.8 149.3M819.2 145.2L820.7 145.5L821.6 146.2L823.8 145.7L824.5 144.8M821.6 146.2L821.7 147.0L821.1 147.9L820.8 149.6M823.8 149.3L826.4 150.8L827.4 151.9M823.8 149.3L821.4 149.3L821.6 150.3L821.4 151.0L820.6 151.7M820.8 149.6L820.4 150.5L820.6 151.7M820.4 150.5L821.6 150.3M820.6 151.7L820.7 152.8L821.5 154.3M821.5 154.3L823.1 155.1L823.8 155.2L824.2 156.6L824.4 156.6M824.4 156.6L826.6 156.4L828.3 155.9M821.5 154.3L820.0 154.5L820.1 155.2L819.9 156.8L820.9 157.0L820.9 157.9L820.0 157.5L819.1 156.6L817.1 156.4M817.1 156.4L815.5 156.4L815.5 155.4L815.4 153.7L813.8 153.5L813.4 154.1L812.4 154.1L811.8 152.7L809.3 152.7L808.7 152.6M817.1 156.4L816.9 157.6L815.5 157.6L815.5 159.8L816.5 160.8M808.4 160.6L810.0 160.6L813.1 160.6L814.8 161.0L816.5 160.8L817.7 160.9M814.8 161.0L814.8 163.8L814.1 163.8L814.1 165.7M814.1 165.7L814.1 168.2L812.4 168.5L811.7 168.4M814.1 165.7L815.2 167.1L816.2 166.1L817.9 166.4L819.0 165.0L820.6 163.9M817.7 160.9L818.3 161.7L819.5 162.8L820.6 163.9M817.7 160.9L819.0 161.0L820.3 159.6L821.3 159.4M821.3 159.4L823.1 160.2L823.0 161.7L822.8 163.3L822.0 164.1M820.6 163.9L822.0 164.1M822.0 164.1L822.4 165.5L822.4 167.1L823.1 167.2M819.1 169.1L819.9 168.4L820.6 169.0L819.9 169.7L819.1 169.1M821.7 166.7L822.4 166.5L822.4 167.3L821.7 167.4L821.7 166.7M823.1 155.1L823.3 156.1L823.1 158.3L821.2 158.8L821.3 159.4M824.4 156.6L824.2 157.9L825.1 158.9L824.7 160.4L824.0 159.7L824.2 158.6L823.1 158.3M794.2 119.7L795.8 119.8L795.4 121.4L795.1 122.9M799.0 118.7L800.7 119.1L802.5 119.4M805.5 118.4L805.1 117.6L805.1 116.9L804.5 116.7L805.1 115.8L805.5 115.8M805.5 115.8L805.9 114.8L804.7 114.5L804.4 114.1M804.4 114.5L803.2 114.1L802.0 113.3M802.6 113.1L803.7 113.1L804.4 113.6M804.4 114.1L804.4 113.6L804.4 112.9L805.2 111.9M806.2 110.7L807.1 110.8M810.1 111.4L810.4 112.7L810.7 113.4M810.7 113.4L808.7 113.9L809.8 115.0M809.8 115.0L809.3 115.8L807.2 115.8L806.9 115.8L805.5 115.8M805.1 116.9L806.5 116.9L807.5 116.5L808.7 116.2L809.8 116.5M806.9 115.8L807.5 116.5M809.8 116.5L811.3 116.3L812.0 115.5M809.8 115.0L810.7 114.8L812.0 115.1L812.0 115.5M810.7 113.4L811.7 113.9L813.3 114.5M812.0 115.1L813.3 114.5L814.1 114.7L815.9 114.7M812.0 115.5L813.3 115.6L815.6 115.2L815.9 114.7M815.9 114.7L816.9 113.8L816.6 112.7L816.8 111.3M814.0 111.1L816.1 111.1L816.8 111.3M814.8 110.5L816.1 110.7L816.1 111.1M816.8 111.3L818.1 111.0L818.7 110.2M814.8 109.9L816.9 109.8L818.7 110.2M817.1 108.7L819.2 108.9M818.7 110.2L819.8 109.8L819.5 109.1L819.2 108.9L819.3 107.9L819.7 107.6M819.8 109.8L821.6 110.2L821.7 110.9L822.8 111.8L822.1 112.7M816.6 113.0L819.0 113.1L821.4 113.2L822.1 112.7M822.1 112.7L823.8 112.5L824.9 113.8L826.6 114.2L828.0 114.4L827.8 115.6L826.7 116.1M815.6 115.2L817.2 115.6L818.7 115.4L819.8 116.5L819.8 117.2L820.8 117.4M818.7 115.4L820.4 115.4L821.1 116.6L820.3 116.9M815.6 115.2L815.2 116.5L814.3 116.8M814.3 116.8L813.3 116.9L811.7 116.6L811.3 116.3M814.3 116.8L815.1 117.7L816.0 118.1M816.0 118.1L817.6 118.5L819.0 118.2L820.1 118.4M816.0 118.1L815.8 119.4L816.2 120.1M816.2 120.1L818.3 119.8L818.6 119.8L819.7 119.6M818.6 119.8L818.3 120.5M814.1 121.2L814.8 120.5L816.2 120.1M813.8 119.6L814.5 119.4L814.5 120.3L814.8 120.5M814.5 119.4L815.8 119.4M809.8 117.2L811.0 117.2L811.3 117.6L813.4 117.6L813.6 117.6L813.8 118.6L813.1 119.3M811.3 117.6L811.3 118.3L812.4 118.9M813.4 117.6L813.4 116.9M813.6 117.6L815.1 117.7M813.8 118.6L814.5 119.1L814.5 119.4M809.8 116.5L809.8 117.2M808.0 107.9L808.9 106.5L808.6 104.8L810.0 104.1L811.3 102.0L812.7 101.3L814.5 101.0M814.5 101.0L816.7 101.8L816.9 103.2M814.5 101.0L818.1 100.6L819.7 100.3L820.4 100.9L821.6 100.4M820.4 100.9L820.4 102.4L821.1 103.3L820.8 104.4L822.1 105.2L819.5 106.9M795.3 110.7L795.1 111.2L796.0 111.3M828.0 118.6L830.4 119.1L832.5 119.8L833.9 119.7M825.3 123.6L826.6 123.2L829.6 122.9M829.6 122.9L831.3 122.9L831.0 121.4L831.3 121.2M831.3 121.2L830.5 120.3L829.0 120.0M831.3 122.9L832.1 123.9L831.8 125.2L833.4 126.7L833.9 127.9M831.3 121.2L832.5 121.8L833.5 121.3L834.2 122.1M830.5 120.3L831.4 120.1L832.5 119.8M831.4 120.1L831.8 120.7L832.5 121.8M829.6 122.9L828.8 124.6L827.2 125.6M827.2 125.6L827.4 126.4L829.4 127.1L831.2 128.5L832.5 128.5L833.3 127.9M832.5 128.5L833.2 129.0L833.8 129.0M827.2 125.6L825.8 126.3L825.0 126.1L824.9 125.6L825.5 124.8L825.2 124.7M824.9 125.6L824.6 125.8M827.4 126.4L825.9 126.9L826.6 127.6L825.2 128.5L824.5 128.3M824.9 126.1L824.9 126.9L824.5 128.3M824.0 127.0L824.4 128.3M829.9 137.3L830.3 136.5L832.8 136.9L834.2 135.8L836.3 135.5M836.3 135.5L837.1 137.2M836.3 135.5L838.4 134.8L838.9 133.4L838.5 133.0L836.7 132.8L836.0 131.8M838.5 133.0L839.1 131.9L839.3 131.0M835.5 131.5L835.7 131.6M834.6 116.5L832.8 115.5L832.8 114.1L835.6 112.9L838.4 113.4L841.2 113.4L842.9 111.7L846.0 111.0L849.5 111.2L851.2 111.5L853.3 111.2L855.7 113.4L857.8 113.4L860.8 114.7M860.8 114.7L859.5 116.2L857.4 117.4L855.9 118.9L855.8 119.5M855.8 119.5L852.9 120.7L851.4 121.3M855.8 119.5L852.2 118.9L849.5 119.2L849.1 120.0M840.8 117.2L839.1 117.6L839.1 120.1M842.5 118.0L845.3 118.6L846.0 119.6L847.4 120.3L849.5 119.4M839.1 120.1L840.8 119.3L841.8 119.6L842.9 120.2L843.9 121.4L846.3 122.8M837.6 122.9L839.1 122.4L840.5 122.6L842.5 123.4L842.7 124.0M839.1 120.1L837.7 119.6L836.6 119.8M842.7 124.0L843.9 123.8L845.0 123.4L846.3 122.8L847.4 123.1L848.8 122.4L849.8 123.1L849.8 122.2L852.2 122.9M851.4 121.3L852.2 122.9M851.4 121.3L849.1 121.2L848.1 120.9L847.4 121.7L847.3 122.9M849.1 120.0L850.2 120.3L850.9 120.6L849.1 120.9L848.1 120.9M852.2 122.9L849.8 123.8L849.5 125.2L848.4 125.8L848.3 126.7L846.3 127.2L846.0 128.1L842.5 128.3L842.5 128.1M842.7 124.0L842.3 125.5L842.5 126.9L842.5 128.1M842.5 128.1L843.8 129.8L843.0 131.2M840.6 117.9L841.2 116.9L842.5 116.5L842.9 117.6L841.8 118.6L840.6 117.9M847.5 132.3L849.5 131.7L848.8 129.4L850.9 127.9L851.9 127.2L851.9 126.0L853.6 124.1M852.2 122.9L853.6 124.1L855.0 126.2L856.4 127.8M851.9 124.8L853.6 124.1M856.4 127.8L855.7 128.7L858.5 129.8L861.3 130.4L861.3 129.4L858.5 128.7L856.4 127.8M861.3 129.4L861.9 129.8L864.0 129.4L867.7 129.2M861.9 129.8L861.9 130.2L864.0 130.1L864.0 129.4M861.3 130.4L861.3 131.7L861.9 133.4M861.9 130.7L864.2 131.4L863.5 132.4L864.4 132.9L864.2 134.3M861.6 130.5L861.9 130.7M867.7 129.2L866.1 130.7L865.8 131.7L864.9 133.1L864.2 134.3M867.7 129.2L868.5 131.4L868.9 133.4L870.4 133.8M870.4 133.8L869.6 134.6L868.2 135.2L868.0 136.5L868.8 137.6L868.3 138.6L869.1 140.5L868.7 141.6M870.4 133.8L871.1 133.1L873.4 132.6L875.1 133.7M871.1 133.1L871.6 134.1L872.7 134.7L872.3 135.2L873.4 136.2L874.4 137.4L874.8 138.6M869.6 134.6L870.3 136.4L871.0 136.2L872.3 136.0L872.8 137.2L873.4 138.6M871.3 140.2L871.3 138.8L873.4 138.6L874.8 138.6L874.8 140.1L873.6 141.0L872.7 141.4M869.6 144.1L870.3 144.6L871.0 144.3M876.2 147.2L877.2 147.9L878.6 147.6L880.0 146.6L880.3 145.7L881.7 145.7M879.4 145.4L880.2 145.2M898.0 150.4L898.0 154.9M886.3 155.1L887.0 154.8M861.1 114.7L863.3 117.4L866.8 119.1L870.3 119.2L873.0 119.8L876.5 119.1L877.9 118.4L877.9 117.6L880.7 116.5L883.3 116.3L882.7 115.6L880.7 115.5L880.7 114.2L881.9 114.4M861.1 114.7L864.0 113.6L868.2 114.0L868.5 112.7L871.1 113.1L871.1 113.8L874.4 114.1L879.3 114.0L881.9 114.4M881.9 114.4L883.4 112.4L885.9 111.7L888.6 114.1L890.9 115.0L893.8 115.2L892.4 117.6L891.1 117.6L891.1 118.9L890.8 119.4M886.4 121.0L887.6 120.0L889.1 119.6L890.7 119.3M887.7 122.5L889.3 122.0M809.8 117.2L810.9 117.2L811.7 116.6M811.2 117.4L812.0 117.4L813.4 117.6L813.8 118.3L813.1 119.2L812.5 118.9L811.3 118.1L811.2 117.4M813.1 119.3L813.6 118.6L814.3 119.1L813.8 119.6M814.3 119.1L815.3 119.1L815.2 119.5L814.5 119.7L814.3 119.1M814.5 120.1L815.2 119.5L816.1 119.6L816.2 120.1L814.8 120.4M807.7 110.1L808.9 110.0L808.7 110.7L807.9 110.7L807.7 110.1M807.1 110.3L807.7 110.5L807.4 110.7L807.1 110.3M812.9 109.3L813.4 108.7M815.5 108.4L816.2 108.2L815.9 108.6L815.5 108.4M811.6 109.8L812.0 109.1M821.4 107.1L822.8 106.4L821.7 106.1L821.1 106.5L821.4 107.1M824.5 106.5L825.2 105.5L824.2 105.8L824.5 106.5M804.4 114.5L804.8 114.2L804.5 114.0M806.8 116.1L806.9 116.0M804.5 116.7L805.0 116.5L805.0 115.9M806.1 116.5L806.5 116.9M805.1 116.9L805.8 116.5L806.1 115.8M810.5 116.5L811.3 116.4M811.5 115.5L812.0 115.1M809.1 115.8L809.8 115.3M812.4 116.3L813.4 116.0M814.8 116.2L815.5 115.6M816.2 116.9L817.6 116.3L818.6 116.9M816.9 117.9L818.3 117.6M815.9 118.7L817.2 118.9M810.0 113.6L811.3 113.7M813.4 113.9L814.5 113.6L815.5 113.8M812.0 112.7L814.1 112.4M811.3 112.0L812.7 111.7M806.5 114.1L807.9 113.8M805.8 113.1L807.2 112.7M807.5 115.1L808.6 114.8M806.1 115.1L806.8 115.5M801.6 115.1L802.7 115.5M800.3 116.2L801.6 116.5M803.4 117.6L804.3 117.2M801.3 118.3L802.3 117.9M797.5 121.0L798.9 120.7M796.1 122.0L797.8 122.3M797.5 119.6L798.9 119.3M807.5 117.9L808.6 118.3M806.5 117.4L807.9 117.2M808.9 119.3L809.6 119.6M810.7 120.3L811.3 120.7M815.2 121.7L815.9 122.0M815.5 122.7L816.2 122.5M816.5 122.0L817.2 122.4M817.2 120.8L817.9 121.0M818.1 121.6L818.6 121.7M818.9 122.6L819.1 122.7M819.5 123.8L819.8 123.5M810.0 106.5L811.0 107.9M809.3 108.2L810.0 107.9M810.0 108.6L810.7 108.2M818.3 105.8L819.7 105.5L820.4 106.2M817.6 106.2L818.3 106.5M819.0 104.8L820.0 104.4M925.0 98.6L925.0 106.0M675.5 101.3L675.5 104.1" fill="none" stroke="#808080" stroke-width="1" shape-rendering="crispEdges"/>
<path d="M713.8 115.2L715.0 115.3L715.0 114.8L734.4 114.8L734.7 115.0L737.2 115.4L738.6 115.5L741.5 116.5L742.4 117.0L743.1 118.9L742.7 119.6L745.5 119.1L745.5 118.7L747.2 118.5L748.5 117.6L750.7 117.6L751.5 116.9L752.3 115.9L753.1 116.0L753.3 117.1L753.8 117.6L751.7 118.5L751.0 119.3L751.7 119.6L750.7 120.1L749.0 120.6L747.9 121.7L747.6 123.1L747.8 124.3L746.3 125.2L745.2 125.8L744.1 126.5L743.8 127.6L744.7 130.0L744.7 131.2L744.0 131.2L742.9 129.5L742.9 128.5L742.0 127.9L741.0 128.1L739.6 127.7L738.2 127.8L738.4 128.6L737.2 128.4L735.2 128.1L734.4 128.6L732.8 129.6L732.9 130.7L731.3 129.6L730.3 128.3L728.9 128.6L727.8 128.1L726.4 126.7L725.3 126.7L725.3 127.0L723.3 127.0L720.7 126.2L719.1 126.2L718.1 125.2L716.7 124.7L715.7 123.2L715.4 122.5L714.3 120.8L714.2 118.9L714.3 116.7L713.8 115.2M736.5 116.4L739.3 116.3L741.3 116.3M739.4 119.3L739.6 119.8L740.3 119.6L740.4 118.3L741.3 117.1L742.4 117.0M742.4 119.8L743.4 120.0L745.5 119.1M714.3 116.7L717.8 116.9L719.2 116.9M719.2 114.8L719.2 116.9L719.2 119.6M714.2 119.6L723.3 119.6M717.1 119.6L717.1 121.7L720.8 124.5M721.2 119.6L721.2 123.1L720.8 124.5L720.8 126.1M719.9 114.8L719.9 115.5L720.9 116.5L721.9 117.9L723.3 117.9M723.3 117.6L723.3 119.6M723.3 117.6L728.2 117.6M723.3 119.6L723.3 120.3L724.7 120.3L724.7 123.1L724.7 127.0M721.2 123.1L734.7 123.1M724.7 120.3L729.6 120.3L729.6 123.1M728.2 114.8L728.2 120.3M728.2 116.9L733.4 116.9M728.2 118.9L732.0 118.9L733.4 119.3M729.6 121.0L734.2 121.0M728.9 123.1L728.9 126.5L726.4 126.5M728.9 123.4L730.9 123.4L730.9 124.8L734.8 125.4M733.0 114.8L733.4 116.9L733.4 118.6L733.7 120.0L734.1 121.0L734.7 121.7L734.7 123.4M733.4 118.6L737.0 118.6M733.9 120.6L736.8 120.7M734.7 123.4L737.9 123.4M735.1 125.8L737.0 125.8M734.7 123.4L734.8 125.4L735.1 125.8L735.3 127.9M736.5 116.4L735.9 117.6L737.0 118.6L737.7 119.6L737.0 120.8L737.7 121.8L738.4 123.1L737.9 124.5L737.0 125.8L736.8 127.2L738.0 127.2L738.2 127.8M737.5 119.3L739.4 119.3M737.6 116.5L739.5 117.5M739.6 119.8L739.6 121.7L739.3 122.5M741.5 119.8L741.5 121.6M740.0 119.8L742.4 119.8M738.4 123.1L739.3 122.5L740.7 122.4L741.5 121.6L743.1 122.0L744.5 120.6M744.5 119.6L744.5 121.2M744.9 119.6L748.1 119.6L748.3 120.9L747.9 121.4M744.5 121.2L747.7 121.2L747.9 122.0M738.2 123.4L743.6 123.4L747.7 123.4M737.7 124.5L742.7 124.5M743.6 123.4L741.8 124.5M739.1 124.5L739.0 127.7M740.9 124.5L741.3 126.3L741.3 127.2M739.5 127.2L741.3 127.2L743.4 127.6L743.8 127.4M739.5 127.2L739.6 127.7M742.7 124.5L744.1 126.5M742.7 124.5L744.3 124.5L745.8 125.2M743.1 122.1L743.6 122.9L744.6 122.7L745.8 121.8L746.4 121.5L745.2 121.5L745.2 121.2M743.6 122.9L742.3 123.4M746.4 121.5L746.9 121.8L747.4 122.4M749.5 117.6L749.5 119.1M750.7 117.6L750.0 119.1M751.0 117.4L751.3 118.9M749.5 119.1L751.0 119.1M749.3 119.6L750.8 119.6L750.5 120.1M749.3 119.6L749.2 120.3M748.3 120.9L749.0 120.1L749.2 120.3M691.6 99.5L692.5 99.6M706.7 107.9L708.1 109.3L709.1 110.5L710.0 110.7M707.4 108.9L706.3 109.1L707.0 109.8M708.1 110.0L707.7 110.5M689.0 108.1L688.0 108.1M685.2 111.3L686.9 110.9L688.7 110.5L690.1 110.0M693.2 108.9L694.6 108.7L693.9 109.3L693.2 108.9M684.9 111.6L683.8 111.8M683.1 112.2L682.4 112.2M680.7 112.5L679.3 112.7M678.3 112.9L676.9 113.0M681.4 104.8L682.6 105.0M685.1 107.0L685.5 107.3M689.2 133.5L689.8 133.4M690.6 133.8L691.0 133.9M691.3 134.1L692.1 134.3M692.1 134.7L692.8 135.0L692.3 135.5L692.1 134.7M919.0 112.3L920.6 112.3M922.8 112.9L924.5 112.9" fill="none" stroke="#008000" stroke-width="1" shape-rendering="crispEdges"/>
<path d="M675.5 90.5V211.5M675 211.5H925.5M672 211.5H675M673 207.5H675M672 204.5H675M673 200.5H675M672 197.5H675M673 193.5H675M672 190.5H675M673 187.5H675M672 183.5H675M673 180.5H675M672 176.5H675M673 173.5H675M672 169.5H675M673 166.5H675M672 162.5H675M673 159.5H675M672 156.5H675M673 152.5H675M672 149.5H675M673 145.5H675M672 142.5H675M673 138.5H675M672 135.5H675M673 131.5H675M672 128.5H675M673 124.5H675M672 121.5H675M673 118.5H675M672 114.5H675M673 111.5H675M672 107.5H675M673 104.5H675M672 100.5H675M673 97.5H675M672 93.5H675M675.5 212V215M682.5 212V214M689.5 212V215M696.5 212V214M703.5 212V215M710.5 212V214M717.5 212V215M724.5 212V214M730.5 212V215M737.5 212V214M744.5 212V215M751.5 212V214M758.5 212V215M765.5 212V214M772.5 212V215M779.5 212V214M786.5 212V215M793.5 212V214M800.5 212V215M807.5 212V214M814.5 212V215M821.5 212V214M827.5 212V215M834.5 212V214M841.5 212V215M848.5 212V214M855.5 212V215M862.5 212V214M869.5 212V215M876.5 212V214M883.5 212V215M890.5 212V214M897.5 212V215M904.5 212V214M911.5 212V215M918.5 212V214M925.5 212V215" fill="none" stroke="#000" stroke-width="1" shape-rendering="crispEdges"/>
<g font-family="Liberation Sans" font-size="8.1" fill="#151515">
<text x="670" y="213.5" text-anchor="end">−90</text>
<text x="670" y="206.5" text-anchor="end">−80</text>
<text x="670" y="199.6" text-anchor="end">−70</text>
<text x="670" y="192.7" text-anchor="end">−60</text>
<text x="670" y="185.8" text-anchor="end">−50</text>
<text x="670" y="178.9" text-anchor="end">−40</text>
<text x="670" y="172.0" text-anchor="end">−30</text>
<text x="670" y="165.1" text-anchor="end">−20</text>
<text x="670" y="158.2" text-anchor="end">−10</text>
<text x="670" y="151.3" text-anchor="end">0</text>
<text x="670" y="144.4" text-anchor="end">10</text>
<text x="670" y="137.5" text-anchor="end">20</text>
<text x="670" y="130.6" text-anchor="end">30</text>
<text x="670" y="123.7" text-anchor="end">40</text>
<text x="670" y="116.8" text-anchor="end">50</text>
<text x="670" y="109.9" text-anchor="end">60</text>
<text x="670" y="103.0" text-anchor="end">70</text>
<text x="670" y="96.1" text-anchor="end">80</text>
<text x="675.5" y="223.5" text-anchor="middle">−180</text>
<text x="689.4" y="223.5" text-anchor="middle">−160</text>
<text x="703.2" y="223.5" text-anchor="middle">−140</text>
<text x="717.1" y="223.5" text-anchor="middle">−120</text>
<text x="730.9" y="223.5" text-anchor="middle">−100</text>
<text x="744.8" y="223.5" text-anchor="middle">−80</text>
<text x="758.7" y="223.5" text-anchor="middle">−60</text>
<text x="772.5" y="223.5" text-anchor="middle">−40</text>
<text x="786.4" y="223.5" text-anchor="middle">−20</text>
<text x="800.3" y="223.5" text-anchor="middle">0</text>
<text x="814.1" y="223.5" text-anchor="middle">20</text>
<text x="828.0" y="223.5" text-anchor="middle">40</text>
<text x="841.8" y="223.5" text-anchor="middle">60</text>
<text x="855.7" y="223.5" text-anchor="middle">80</text>
<text x="869.6" y="223.5" text-anchor="middle">100</text>
<text x="883.4" y="223.5" text-anchor="middle">120</text>
<text x="897.3" y="223.5" text-anchor="middle">140</text>
<text x="911.2" y="223.5" text-anchor="middle">160</text>
<text x="925.0" y="223.5" text-anchor="middle">180</text>
</g>
<g font-family="Liberation Sans" font-size="9.6" fill="#111">
<text x="800" y="238.6" text-anchor="middle" textLength="56" lengthAdjust="spacingAndGlyphs">X-coordinate</text>
<text transform="translate(650.6,150) rotate(-90)" text-anchor="middle" textLength="58" lengthAdjust="spacingAndGlyphs">Y-coordinate</text>
</g>
</svg>

<span class="t" style="left:30.70px;top:9.2px;transform:scaleX(0.9494);color:#1a1a1a;">Apps: impSHP</span>
<span class="t" style="left:8.93px;top:37.8px;transform:scaleX(0.9712);">Dialog Theme</span>
<span class="t" style="left:97.02px;top:40.1px;transform:scaleX(0.9764);">&lt;Last used&gt; *</span>
<span class="t" style="left:6.25px;top:67.8px;transform:scaleX(0.9456);">Creates a map from an ESRI shapefile</span>
<span class="t" style="left:14.39px;top:115.4px;transform:scaleX(0.9089);font-weight:700;">File Name (shape)</span>
<span class="t" style="left:14.37px;top:141.4px;transform:scaleX(0.9281);font-weight:700;">File Name (attribute)</span>
<span class="t" style="left:14.38px;top:167.4px;transform:scaleX(0.9177);font-weight:700;">File Name (projection)</span>
<span class="t" style="left:29.42px;top:191.4px;transform:scaleX(0.8844);font-weight:700;">File Info</span>
<span class="t" style="left:29.41px;top:210.4px;transform:scaleX(0.8867);font-weight:700;">Display Options</span>
<span class="t" style="left:42.41px;top:235.4px;transform:scaleX(0.8882);">Line Style</span>
<span class="t" style="left:42.32px;top:264.4px;transform:scaleX(0.9782);">Line Width</span>
<span class="t" style="left:42.35px;top:294.4px;transform:scaleX(0.9491);">Line Color</span>
<span class="t" style="left:42.35px;top:327.4px;transform:scaleX(0.9522);">Fill Color</span>
<span class="t" style="left:42.36px;top:354.4px;transform:scaleX(0.9351);">Link Axis Length to Scale(isometric)</span>
<span class="t" style="left:42.39px;top:376.4px;transform:scaleX(0.9137);">Rescale Source by Shapefile</span>
<span class="t" style="left:14.37px;top:401.4px;transform:scaleX(0.9292);font-weight:700;">Allow Partial Modification</span>
<span class="t" style="left:17.80px;top:426.4px;transform:scaleX(1.2000);font-weight:700;color:#2f86fb;">If</span>
<span class="t" style="left:31.30px;top:426.4px;transform:scaleX(1.0000);font-weight:700;color:#2f86fb;">the</span>
<span class="t" style="left:52.03px;top:426.4px;transform:scaleX(0.9744);font-weight:700;color:#2f86fb;">number</span>
<span class="t" style="left:99.09px;top:426.4px;transform:scaleX(1.0100);font-weight:700;color:#2f86fb;">of</span>
<span class="t" style="left:113.80px;top:426.4px;transform:scaleX(0.9000);font-weight:700;color:#2f86fb;">shapes</span>
<span class="t" style="left:154.70px;top:426.4px;transform:scaleX(0.7000);font-weight:700;color:#2f86fb;">is</span>
<span class="t" style="left:164.76px;top:426.4px;transform:scaleX(0.9433);font-weight:700;color:#2f86fb;">large,</span>
<span class="t" style="left:198.67px;top:426.4px;transform:scaleX(0.9276);font-weight:700;color:#2f86fb;">allow</span>
<span class="t" style="left:231.32px;top:426.4px;transform:scaleX(0.9824);font-weight:700;color:#2f86fb;">partial</span>
<span class="t" style="left:269.53px;top:426.4px;transform:scaleX(0.9700);font-weight:700;color:#2f86fb;">modification</span>
<span class="t" style="left:342.32px;top:426.4px;transform:scaleX(0.9813);font-weight:700;color:#2f86fb;">might</span>
<span class="t" style="left:378.51px;top:426.4px;transform:scaleX(0.9885);font-weight:700;color:#2f86fb;">need</span>
<span class="t" style="left:409.13px;top:426.4px;transform:scaleX(0.7667);font-weight:700;color:#2f86fb;">a</span>
<span class="t" style="left:418.28px;top:426.4px;transform:scaleX(0.9174);font-weight:700;color:#2f86fb;">long</span>
<span class="t" style="left:446.00px;top:426.4px;transform:scaleX(1.0087);font-weight:700;color:#2f86fb;">wait</span>
<span class="t" style="left:473.30px;top:426.4px;transform:scaleX(0.8818);font-weight:700;color:#2f86fb;">to</span>
<span class="t" style="left:486.72px;top:426.4px;transform:scaleX(0.9815);font-weight:700;color:#2f86fb;">draw</span>
<span class="t" style="left:519.30px;top:426.4px;transform:scaleX(0.9706);font-weight:700;color:#2f86fb;">the</span>
<span class="t" style="left:540.05px;top:426.4px;transform:scaleX(0.9469);font-weight:700;color:#2f86fb;">graph</span>
<span class="t" style="left:31.30px;top:454.4px;transform:scaleX(0.8820);font-weight:700;">Worksheet</span>
<span class="t" style="left:14.39px;top:479.4px;transform:scaleX(0.9140);font-weight:700;">Output Data Points</span>
<span class="t" style="left:30.44px;top:504.4px;transform:scaleX(0.8618);font-weight:700;">Graph</span>
<span class="t" style="left:30.38px;top:532.4px;transform:scaleX(0.9250);font-weight:700;">ROI on Matrix</span>
<span class="t" style="left:261.83px;top:232.4px;transform:scaleX(0.9720);">Solid</span>
<span class="t" style="left:232.91px;top:263.8px;transform:scaleX(0.8867);">0.5</span>
<span class="t" style="left:256.32px;top:294.4px;transform:scaleX(0.8760);">Gray</span>
<span class="t" style="left:256.19px;top:327.4px;transform:scaleX(1.0111);">None</span>
<span class="t" style="left:232.20px;top:401.0px;transform:scaleX(0.9375);">Auto</span>
<span class="t" style="left:234.15px;top:454.4px;transform:scaleX(1.0506);">[&lt;new&gt;]&lt;new&gt;</span>
<span class="t" style="left:234.15px;top:504.4px;transform:scaleX(1.0506);">[&lt;new&gt;]&lt;new&gt;</span>
<span class="t" style="left:541.70px;top:141.6px;transform:scaleX(1.0042);">Auto</span>
<span class="t" style="left:541.70px;top:167.6px;transform:scaleX(1.0042);">Auto</span>
<span class="t" style="left:247.20px;top:575.2px;transform:scaleX(0.9563);">Auto Preview</span>
<span class="t" style="left:352.85px;top:575.2px;transform:scaleX(0.9452);color:#9b9b9b;">Preview</span>
<span class="t" style="left:445.43px;top:575.2px;transform:scaleX(0.8750);">OK</span>
<span class="t" style="left:514.04px;top:575.2px;transform:scaleX(0.9556);">Cancel</span>
<span class="t" style="left:617.41px;top:40.4px;transform:scaleX(0.8881);">Preview</span>
<span class="t" style="left:232.17px;top:115.4px;transform:scaleX(1.0318);">riginLab\Apps\Import</span>
<div style="left:228px;top:115.4px;width:323px;height:16px;overflow:hidden"><span class="t" style="left:122.62px;top:0px;transform:scaleX(0.9803);">Shapefile\Samples\World_Countries_N</span></div>
</body></html>
